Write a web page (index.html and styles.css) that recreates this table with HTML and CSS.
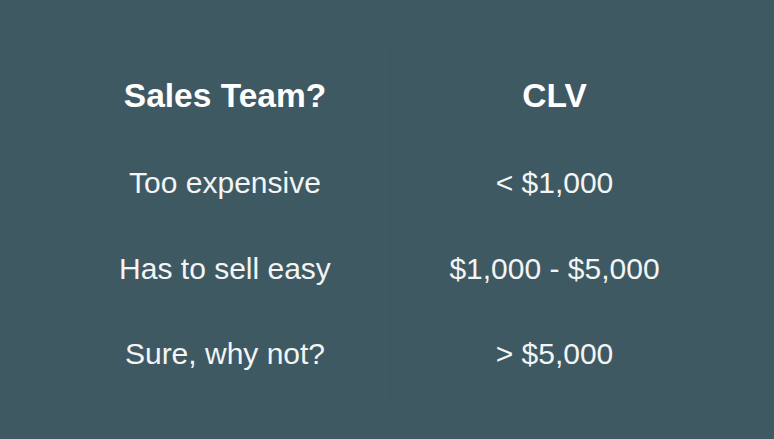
FILE: index.html
```html
<!DOCTYPE html>
<html>
<head>
<meta charset="utf-8">
<link rel="stylesheet" href="styles.css">
</head>
<body>
<div class="slide">
  <div class="col col-left">
    <div class="head">Sales Team?</div>
    <div class="cell">Too expensive</div>
    <div class="cell">Has to sell easy</div>
    <div class="cell">Sure, why not?</div>
  </div>
  <div class="col col-right">
    <div class="head">CLV</div>
    <div class="cell">&lt; $1,000</div>
    <div class="cell">$1,000 - $5,000</div>
    <div class="cell">&gt; $5,000</div>
  </div>
</div>
</body>
</html>
```

FILE: styles.css
```css
html, body {
  margin: 0;
  padding: 0;
  width: 774px;
  height: 439px;
  overflow: hidden;
  background: #3f5963;
}
.slide {
  display: flex;
  padding: 52px 0 0 60px;
  font-family: "Liberation Sans", Arial, sans-serif;
  color: #f3f5f5;
}
.col {
  display: flex;
  flex-direction: column;
  align-items: center;
  text-align: center;
}
.col-left {
  width: 330px;
  border-right: 1px solid rgba(40, 60, 68, 0.2);
}
.col-right {
  width: 327px;
}
.head {
  font-size: 33.5px;
  font-weight: bold;
  line-height: 88px;
  color: #ffffff;
}
.cell {
  font-size: 30px;
  line-height: 85.5px;
}
```
